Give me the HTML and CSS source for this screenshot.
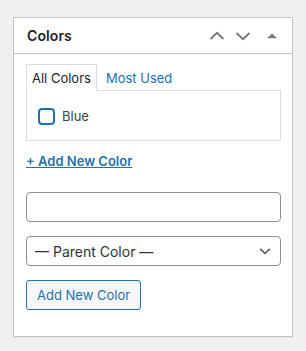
FILE: index.html
```html
<!DOCTYPE html>
<html lang="en">
<head>
  <meta charset="UTF-8">
  <title>Colors</title>
  <link rel="stylesheet" href="styles.css">
</head>
<body>

  <div class="postbox">
    <!-- Header -->
    <div class="postbox-header">
      <h2>Colors</h2>
      <div class="handle-actions">
        <button class="handle-btn" type="button" aria-label="Move up">
          <svg width="16" height="16" viewBox="0 0 16 16"><path d="M1.5 11 8 4.8 14.5 11" fill="none" stroke="#787c82" stroke-width="1.9"/></svg>
        </button>
        <button class="handle-btn" type="button" aria-label="Move down">
          <svg width="16" height="16" viewBox="0 0 16 16"><path d="M1.5 5 8 11.2 14.5 5" fill="none" stroke="#787c82" stroke-width="1.9"/></svg>
        </button>
        <button class="handle-btn" type="button" aria-label="Toggle panel">
          <svg width="16" height="16" viewBox="0 0 16 16"><path d="M3 10.3 8 5.5 13 10.3Z" fill="#787c82"/></svg>
        </button>
      </div>
    </div>

    <div class="inside">
      <!-- Tabs -->
      <ul class="tabs">
        <li class="tab active">All Colors</li>
        <li class="tab"><a href="#">Most Used</a></li>
      </ul>
      <div class="tabs-panel">
        <label class="check-row">
          <span class="checkbox"></span>
          Blue
        </label>
      </div>

      <a class="add-toggle" href="#">+ Add New Color</a>

      <div class="add-form">
        <input type="text" class="text-input">
        <div class="select">
          <span>— Parent Color —</span>
          <svg width="14" height="14" viewBox="0 0 16 16"><path d="M2.5 5.5 8 10.8 13.5 5.5" fill="none" stroke="#50575e" stroke-width="1.8"/></svg>
        </div>
        <div>
          <button type="button" class="button">Add New Color</button>
        </div>
      </div>
    </div>
  </div>

</body>
</html>
```

FILE: styles.css
```css
/* General Styles */
body {
  margin: 0;
  padding: 17px 13px;
  background: #f0f0f1;
  font-family: Inter, "Liberation Sans", sans-serif;
  font-size: 13px;
  color: #1d2327;
}

/* Box */
.postbox {
  width: 278px;
  height: 318px;
  background: #fff;
  border: 1px solid #c3c4c7;
  box-shadow: 0 1px 1px rgba(0, 0, 0, 0.04);
}
.postbox-header {
  display: flex;
  align-items: center;
  justify-content: space-between;
  height: 35px;
  border-bottom: 1px solid #c3c4c7;
  padding-left: 13px;
}
.postbox-header h2 {
  margin: 0;
  font-size: 14px;
  font-weight: 600;
  letter-spacing: 0.1px;
}
.handle-actions {
  display: flex;
  padding-right: 7px;
}
.handle-btn {
  width: 26px;
  height: 35px;
  padding: 0;
  border: none;
  background: none;
  display: flex;
  align-items: center;
  justify-content: center;
}
.handle-btn:nth-child(2) {
  margin-right: 3px;
}

/* Inside */
.inside {
  padding: 10px 11px 0 12px;
}

/* Tabs */
.tabs {
  list-style: none;
  margin: 0;
  padding: 0;
  display: flex;
  height: 26px;
}
.tab {
  padding: 0 5px;
  line-height: 25px;
  font-size: 13px;
  border: 1px solid transparent;
  border-bottom: none;
}
.tab.active {
  border-color: #dcdcde;
  background: #fff;
  position: relative;
  z-index: 1;
  height: 27px;
  padding-top: 1px;
  box-sizing: border-box;
}
.tab + .tab {
  padding-left: 8px;
}
.tab a {
  color: #2271b1;
  text-decoration: none;
  line-height: 26px;
}
.tabs-panel {
  height: 51px;
  border: 1px solid #dcdcde;
  padding: 17px 11px 0;
  box-sizing: border-box;
}
.check-row {
  display: flex;
  align-items: center;
  gap: 7px;
  font-size: 13px;
  line-height: 17px;
  color: #3c434a;
}
.checkbox {
  width: 17px;
  height: 17px;
  box-sizing: border-box;
  border: 2px solid #2271b1;
  border-radius: 4px;
}

/* Add New */
.add-toggle {
  display: block;
  width: max-content;
  margin-top: 11px;
  line-height: 18px;
  color: #2271b1;
  font-weight: 600;
  text-decoration: underline;
  font-size: 13px;
}
.add-form {
  display: flex;
  flex-direction: column;
  gap: 14px;
  margin-top: 22px;
}
.text-input {
  margin: 0;
  height: 30px;
  box-sizing: border-box;
  border: 1px solid #8c8f94;
  border-radius: 4px;
  width: 100%;
}
.select {
  height: 30px;
  box-sizing: border-box;
  border: 1px solid #8c8f94;
  border-radius: 4px;
  display: flex;
  align-items: center;
  justify-content: space-between;
  padding: 0 8px 0 8px;
  font-size: 14px;
  color: #2c3338;
}
.button {
  height: 30px;
  padding: 0 10px;
  border: 1px solid #2271b1;
  border-radius: 3px;
  background: #f6f7f7;
  color: #2271b1;
  font-family: inherit;
  font-size: 13px;
}
```
